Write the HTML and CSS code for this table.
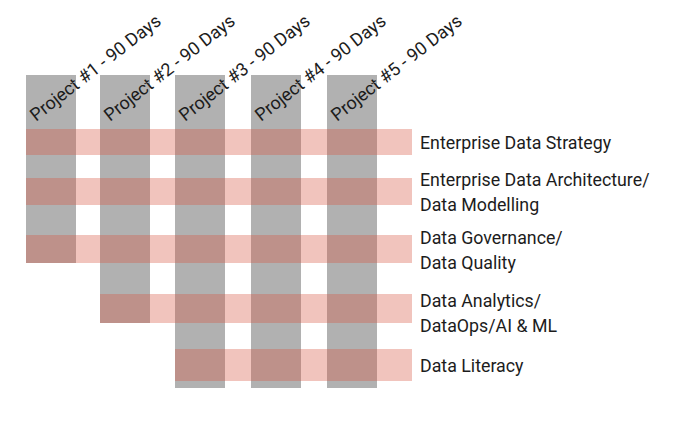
FILE: index.html
```html
<!DOCTYPE html>
<html lang="en">
<head>
<meta charset="utf-8">
<title>Projects and capabilities</title>
<link rel="stylesheet" href="styles.css">
</head>
<body>
<div class="chart">
  <div class="col col-1"><span class="proj">Project #1 - 90 Days</span></div>
  <div class="col col-2"><span class="proj">Project #2 - 90 Days</span></div>
  <div class="col col-3"><span class="proj">Project #3 - 90 Days</span></div>
  <div class="col col-4"><span class="proj">Project #4 - 90 Days</span></div>
  <div class="col col-5"><span class="proj">Project #5 - 90 Days</span></div>

  <div class="band band-1"></div>
  <div class="band band-2"></div>
  <div class="band band-3"></div>
  <div class="band band-4"></div>
  <div class="band band-5"></div>

  <div class="label label-1">Enterprise Data Strategy</div>
  <div class="label label-2">Enterprise Data Architecture/<br>Data Modelling</div>
  <div class="label label-3">Data Governance/<br>Data Quality</div>
  <div class="label label-4">Data Analytics/<br>DataOps/AI &amp; ML</div>
  <div class="label label-5">Data Literacy</div>
</div>
</body>
</html>
```

FILE: styles.css
```css
html, body {
  margin: 0;
  padding: 0;
  background: #ffffff;
}

body {
  width: 698px;
  height: 428px;
  overflow: hidden;
  font-family: Roboto, "Liberation Sans", sans-serif;
  color: #1c1c1c;
}

.chart {
  display: grid;
  grid-template-columns: 26px 50px 24px 50px 25px 50px 26px 50px 26px 50px 35px 8px 1fr;
  grid-template-rows: 75px 54px 26px 23px 27px 30px 28px 31px 29px 26px 32px 7px;
}

.col {
  position: relative;
  z-index: 0;
  background: #b1b1b1;
}

.col-1 { grid-column: 2; grid-row: 2 / 8; }
.col-2 { grid-column: 4; grid-row: 2 / 10; }
.col-3 { grid-column: 6; grid-row: 2 / 13; }
.col-4 { grid-column: 8; grid-row: 2 / 13; }
.col-5 { grid-column: 10; grid-row: 2 / 13; }

.proj {
  position: absolute;
  left: 10px;
  top: 47px;
  font-size: 18px;
  line-height: 18px;
  white-space: nowrap;
  transform-origin: 0 0;
  transform: rotate(-38deg) translateY(-15px);
}

.band {
  position: relative;
  z-index: 1;
  background: rgba(215, 85, 65, 0.35);
}

.band-1 { grid-column: 2 / 12; grid-row: 3; }
.band-2 { grid-column: 2 / 12; grid-row: 5; }
.band-3 { grid-column: 2 / 12; grid-row: 7; }
.band-4 { grid-column: 4 / 12; grid-row: 9; }
.band-5 { grid-column: 6 / 12; grid-row: 11; }

.label {
  grid-column: 13;
  align-self: center;
  font-size: 17.8px;
  line-height: 25px;
  white-space: nowrap;
}

.label-1 { grid-row: 3; }
.label-2 { grid-row: 5; }
.label-3 { grid-row: 7; margin-top: 2px; }
.label-4 { grid-row: 9; margin-top: 9px; }
.label-5 { grid-row: 11; }
```
